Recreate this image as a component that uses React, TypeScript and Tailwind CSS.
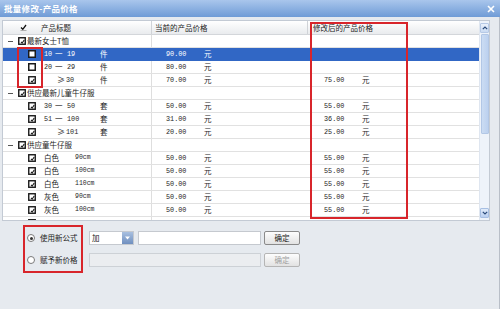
import React from "react";

const CJK = '"Noto Sans CJK SC", "Noto Sans", sans-serif';
const MONO = '"Liberation Mono", "DejaVu Sans Mono", monospace';

type Row =
  | { kind: "group"; label: string }
  | {
      kind: "item";
      a: string;
      b?: string;
      ge?: boolean;
      unit: string;
      price: string;
      newPrice?: string;
      check: "empty" | "checked";
      selected?: boolean;
    }
  | { kind: "color"; color: string; size: string; price: string; newPrice: string }
  | { kind: "partial" };

const rows: Row[] = [
  { kind: "group", label: "最新女士T恤" },
  { kind: "item", a: "10", b: "19", unit: "件", price: "90.00", check: "empty", selected: true },
  { kind: "item", a: "20", b: "29", unit: "件", price: "80.00", check: "empty" },
  { kind: "item", a: "30", ge: true, unit: "件", price: "70.00", newPrice: "75.00", check: "checked" },
  { kind: "group", label: "供应最新儿童牛仔服" },
  { kind: "item", a: "30", b: "50", unit: "套", price: "50.00", newPrice: "55.00", check: "checked" },
  { kind: "item", a: "51", b: "100", unit: "套", price: "31.00", newPrice: "36.00", check: "checked" },
  { kind: "item", a: "101", ge: true, unit: "套", price: "20.00", newPrice: "25.00", check: "checked" },
  { kind: "group", label: "供应童牛仔服" },
  { kind: "color", color: "白色", size: "90cm", price: "50.00", newPrice: "55.00" },
  { kind: "color", color: "白色", size: "100cm", price: "50.00", newPrice: "55.00" },
  { kind: "color", color: "白色", size: "110cm", price: "50.00", newPrice: "55.00" },
  { kind: "color", color: "灰色", size: "90cm", price: "50.00", newPrice: "55.00" },
  { kind: "color", color: "灰色", size: "100cm", price: "50.00", newPrice: "55.00" },
  { kind: "partial" },
];

function CheckBox({ variant, size = 8 }: { variant: "empty" | "checked"; size?: number }) {
  return (
    <svg width={size} height={size} viewBox="0 0 8 8" className="shrink-0">
      <rect x="0.75" y="0.75" width="6.5" height="6.5" fill="#fff" stroke="#1a1a1a" strokeWidth={variant === "empty" ? 1.5 : 1.4} />
      {variant === "checked" && (
        <path d="M3 5 L4.2 6 L6.2 3" fill="none" stroke="#1a1a1a" strokeWidth="1.1" />
      )}
    </svg>
  );
}

function Minus() {
  return <div className="w-[5px] h-[1px] bg-[#555] shrink-0" />;
}

function Radio({ checked }: { checked?: boolean }) {
  return (
    <div className="w-[8px] h-[8px] rounded-full border border-[#7a7a7a] bg-white flex items-center justify-center shrink-0">
      {checked && <div className="w-[3px] h-[3px] rounded-full bg-[#333]" />}
    </div>
  );
}

function Price({ price, pl, w }: { price?: string; pl: string; w: string }) {
  if (!price) return null;
  return (
    <div className={`flex items-center ${pl}`}>
      <span className={`${w} text-[6.8px]`} style={{ fontFamily: MONO }}>
        {price}
      </span>
      <span className="text-[7.5px]" style={{ fontFamily: CJK }}>元</span>
    </div>
  );
}

function TableRow({ row }: { row: Row }) {
  const selected = row.kind === "item" && row.selected;
  const text = selected ? "text-white" : "text-[#1e1e1e]";
  return (
    <div
      className={`flex h-[13px] shrink-0 border-b ${selected ? "bg-[#3167c5] border-[#3167c5]" : "border-[#e1e1e1]"} ${text}`}
    >
      <div
        className={`w-[149px] h-full flex items-center border-r ${selected ? "border-transparent" : "border-[#dedede]"}`}
      >
        {row.kind === "group" && (
          <div className="flex items-center pl-[5px]">
            <Minus />
            <div className="ml-[5px]">
              <CheckBox variant="checked" size={8} />
            </div>
            <span className="ml-[1px] text-[7.5px] leading-none" style={{ fontFamily: CJK }}>
              {row.label}
            </span>
          </div>
        )}
        {row.kind === "item" && (
          <div className="flex items-center pl-[25px]">
            <CheckBox variant={row.check} />
            <div className="ml-[8px] w-[56px] flex items-center text-[6.8px]" style={{ fontFamily: MONO }}>
              {row.ge ? (
                <>
                  <span className="w-[9px] ml-[13px] text-[8px]" style={{ fontFamily: CJK }}>≥</span>
                  <span>{row.a}</span>
                </>
              ) : (
                <>
                  <span className="w-[11px]">{row.a}</span>
                  <span className="w-[12px] text-[7.5px]" style={{ fontFamily: CJK }}>一</span>
                  <span>{row.b}</span>
                </>
              )}
            </div>
            <span className="text-[7.5px]" style={{ fontFamily: CJK }}>{row.unit}</span>
          </div>
        )}
        {row.kind === "color" && (
          <div className="flex items-center pl-[25px]">
            <CheckBox variant="checked" />
            <span className="ml-[8px] w-[31px] text-[7.5px]" style={{ fontFamily: CJK }}>{row.color}</span>
            <span className="text-[6.5px]" style={{ fontFamily: MONO }}>{row.size}</span>
          </div>
        )}
        {row.kind === "partial" && (
          <div className="flex items-center pl-[25px]">
            <CheckBox variant="checked" />
          </div>
        )}
      </div>
      <div className="w-[156px] h-full flex items-center">
        {(row.kind === "item" || row.kind === "color") && <Price price={row.price} pl="pl-[14px]" w="w-[38px]" />}
      </div>
      <div className="flex-1 h-full flex items-center">
        {(row.kind === "item" || row.kind === "color") && <Price price={row.newPrice} pl="pl-[16px]" w="w-[38px]" />}
      </div>
    </div>
  );
}

function Scrollbar() {
  return (
    <div className="w-[10px] h-full bg-[#eef3fa] border-l border-[#dfe6f0] flex flex-col items-center pt-[2px] pb-[2px]">
      <div className="w-[9px] h-[10px] bg-gradient-to-b from-[#eaf1fb] to-[#c9daf2] border border-[#b6c9e6] rounded-[1px] flex items-center justify-center">
        <svg width="6" height="4" viewBox="0 0 6 4"><path d="M0.8 3.2 L3 1 L5.2 3.2" fill="none" stroke="#2a4a7a" strokeWidth="1.2" /></svg>
      </div>
      <div className="w-[8px] h-[100px] mt-[1px] bg-gradient-to-r from-[#cbdcf3] to-[#bcd1ef] border border-[#b2c7e6] rounded-[1px]" />
      <div className="flex-1" />
      <div className="w-[9px] h-[10px] bg-gradient-to-b from-[#e1ebf9] to-[#b9cff0] border border-[#a7bfe3] rounded-[1px] flex items-center justify-center">
        <svg width="6" height="4" viewBox="0 0 6 4"><path d="M0.8 0.8 L3 3 L5.2 0.8" fill="none" stroke="#2a4a7a" strokeWidth="1.2" /></svg>
      </div>
    </div>
  );
}

function Btn({ disabled }: { disabled?: boolean }) {
  return (
    <div
      className={`w-[36px] h-[14px] rounded-[2px] border flex items-center justify-center text-[7.5px] bg-gradient-to-b from-[#fdfdfd] to-[#e2e2e2] ${disabled ? "border-[#b5b5b5] text-[#a0a0a0]" : "border-[#8a8a8a] text-[#222]"}`}
      style={{ fontFamily: CJK }}
    >
      确定
    </div>
  );
}

export default function App() {
  return (
    <div className="relative w-[500px] h-[309px] bg-[#e6eaef] overflow-hidden flex flex-col" style={{ fontFamily: CJK }}>
      {/* Title bar */}
      <div className="h-[17px] shrink-0 bg-gradient-to-b from-[#a9c6ec] to-[#6f9bd6] flex items-center justify-between pl-[4px] pr-[5px]">
        <span className="text-white font-bold text-[8.5px] leading-none tracking-[0.3px]" style={{ fontFamily: CJK }}>
          批量修改-产品价格
        </span>
        <svg width="8" height="8" viewBox="0 0 8 8"><path d="M1 1 L7 7 M7 1 L1 7" stroke="#fff" strokeWidth="1.6" /></svg>
      </div>

      {/* Body */}
      <div className="flex-1 flex flex-col pt-[3px] pl-[2px] border-r border-[#b9bfc8]">
        {/* Table */}
        <div className="w-[488px] h-[201px] bg-white border border-[#c3cad4] flex">
          <div className="w-[476px] flex flex-col">
            {/* header */}
            <div className="h-[14px] shrink-0 flex bg-gradient-to-b from-[#ffffff] to-[#e9ebee] border-b border-[#d3d6da] text-[7.5px] text-[#222]">
              <div className="w-[149px] flex items-center border-r border-[#d0d3d7] pl-[17px]">
                <svg width="7" height="7" viewBox="0 0 7 7" className="shrink-0">
                  <path d="M1 3.5 L2.8 5.3 L6 1" fill="none" stroke="#111" strokeWidth="1.3" />
                  <path d="M0.5 6.6 L6.5 6.6" stroke="#777" strokeWidth="0.6" />
                </svg>
                <span className="ml-[14px]">产品标题</span>
              </div>
              <div className="w-[156px] flex items-center border-r border-[#d0d3d7] pl-[3px]">当前的产品价格</div>
              <div className="flex-1 flex items-center pl-[5px]">修改后的产品价格</div>
            </div>
            {/* rows */}
            <div className="h-[185px] overflow-hidden flex flex-col">
              {rows.map((r, i) => (
                <TableRow key={i} row={r} />
              ))}
            </div>
          </div>
          <Scrollbar />
        </div>

        {/* Bottom form */}
        <div className="flex flex-col pt-[10px] pl-[25px] gap-[8px] text-[7.5px] text-[#222]">
          <div className="flex items-center h-[14px]">
            <Radio checked />
            <span className="ml-[5px] w-[49px]">使用新公式</span>
            <div className="w-[45px] h-[14px] bg-white border border-[#c5c9cf] flex items-center justify-between">
              <span className="pl-[2px]">加</span>
              <div className="w-[11px] h-full bg-gradient-to-b from-[#a9c0e0] to-[#6f8fbf] flex items-center justify-center">
                <svg width="5" height="4" viewBox="0 0 5 4"><path d="M0 0.5 L5 0.5 L2.5 3.5 Z" fill="#fff" /></svg>
              </div>
            </div>
            <div className="ml-[4px] w-[123px] h-[14px] bg-white border border-[#c5c9cf]" />
            <div className="ml-[3px]">
              <Btn />
            </div>
          </div>
          <div className="flex items-center h-[14px]">
            <Radio />
            <span className="ml-[5px] w-[49px]">赋予新价格</span>
            <div className="w-[172px] h-[14px] bg-[#ebedf0] border border-[#cdd1d6]" />
            <div className="ml-[3px]">
              <Btn disabled />
            </div>
          </div>
        </div>
      </div>

      {/* Red annotation boxes */}
      <div className="absolute left-[17px] top-[47px] w-[26px] h-[41px] border-2 border-[#d8252b]" />
      <div className="absolute left-[310px] top-[22px] w-[98px] h-[197px] border-2 border-[#d8252b]" />
      <div className="absolute left-[23px] top-[225px] w-[60px] h-[48px] border-2 border-[#d8252b]" />
    </div>
  );
}
